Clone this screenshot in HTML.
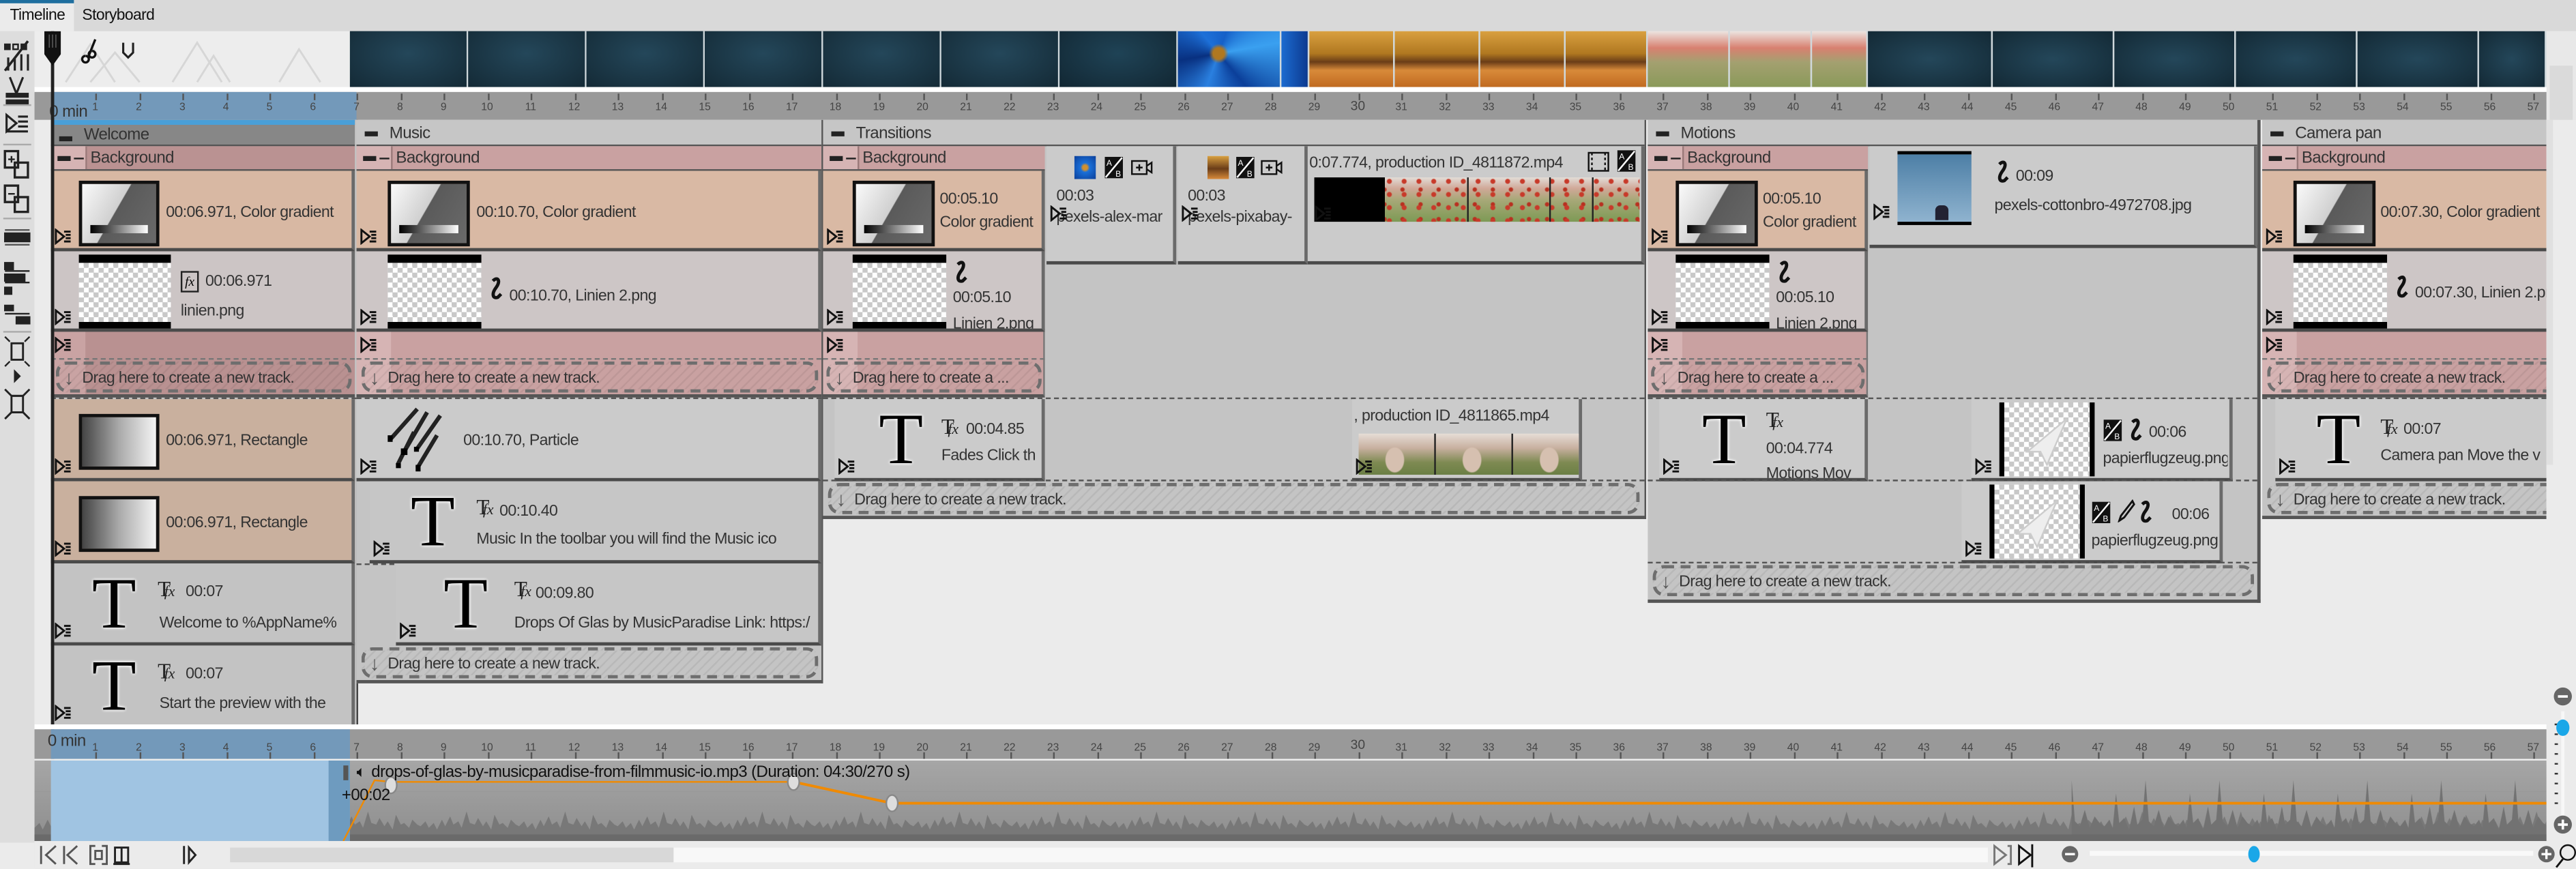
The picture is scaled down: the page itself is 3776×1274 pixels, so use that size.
<!DOCTYPE html>
<html><head><meta charset="utf-8"><style>
html,body{margin:0;padding:0;background:#ebebeb;overflow:hidden}
body{width:3776px;height:1273px}
#s{position:absolute;left:0;top:0;width:1568px;height:529px;transform:scale(2.408163);transform-origin:0 0;font-family:"Liberation Sans",sans-serif;overflow:hidden;background:#ebebeb}
.a{position:absolute}
.t{position:absolute;font-size:9.6px;color:#333;white-space:nowrap;letter-spacing:-.25px;line-height:11px}
.clip{position:absolute;box-sizing:border-box;border-bottom:2px solid #4a4a4a;border-right:2px solid #6a6a6a;overflow:hidden}
.ci{position:absolute;width:11px;height:10px}
.grad{position:absolute;box-sizing:border-box;border:2px solid #111;background:linear-gradient(120deg,#fafafa 0%,#d0d0d0 45%,#5a5a5a 46%,#6a6a6a 100%)}
.grad:after{content:"";position:absolute;left:5px;right:5px;bottom:6px;height:5px;background:linear-gradient(90deg,#000,#fff)}
.chk{position:absolute;box-sizing:border-box;border-top:5px solid #000;border-bottom:4px solid #000;background:repeating-conic-gradient(#c8c8c8 0 25%,#fff 0 50%) 0 0/6px 6px}
.drag{position:absolute;box-sizing:border-box;border:2px dashed #6e6e6e;border-radius:7px;background:repeating-linear-gradient(135deg,rgba(0,0,0,.06) 0 1px,transparent 1px 4px)}
.drag span{position:absolute;left:14px;top:3px;font-size:9.6px;color:#333;white-space:nowrap;letter-spacing:-.25px}
.drag i{position:absolute;left:3px;top:1px;font-style:normal;font-size:12px;color:#555;font-weight:bold}
.T{position:absolute;font-family:"Liberation Serif",serif;font-size:44px;line-height:44px;color:#000;text-shadow:0 0 2px #fff,0 0 2px #fff}
.tfx{position:absolute;font-family:"Liberation Serif",serif;font-size:13px;line-height:13px;color:#222}
.tfx b{font-style:italic;font-size:9px;font-weight:normal;margin-left:-4px}
.gh{position:absolute;height:16px;box-sizing:border-box;border-bottom:1px solid #555;background:#c6c6c6}
.gh .t{top:3px;left:20px;font-size:10px}
.gh:before{content:"";position:absolute;left:5px;top:7px;width:8px;height:3px;background:#222}
.bh{position:absolute;height:15px;box-sizing:border-box;border-bottom:1px solid #555;background:#c9a1a1}
.bh:before{content:"";position:absolute;left:0;top:0;width:21px;height:14px;background:#d6b4b4;border-right:1px solid #9a7a7a}
.bh:after{content:"";position:absolute;left:4px;top:6px;width:8px;height:3px;background:#222;box-shadow:9px 0 0 -1px #222}
.bh .t{left:24px;top:2px;font-size:10px}
.tick{position:absolute;top:57px;width:1px;height:4px;background:#555}
.num{position:absolute;top:62px;font-size:6.5px;color:#444;width:12px;margin-left:-6px;text-align:center}
.anum{position:absolute;top:452px;font-size:6.5px;color:#444;width:12px;margin-left:-6px;text-align:center}
.atick{position:absolute;top:458px;width:1px;height:4px;background:#555}
.frame{position:absolute;top:19px;height:34px;box-sizing:border-box;border-right:1px solid #cfd8dc}
</style></head><body>
<svg width="0" height="0" style="position:absolute">
<defs>
<symbol id="ci" viewBox="0 0 11 10"><path d="M1 1 L6 5 L1 9 Z" fill="none" stroke="#111" stroke-width="1.2"/><path d="M6 2h4M7 4h3M7 6h3M6 8h4" stroke="#111" stroke-width="1.2"/></symbol>
<symbol id="sq" viewBox="0 0 10 16"><path d="M3 3 C6 0 8 3 5 7 C2 11 3 14 6 13 L8 11" fill="none" stroke="#111" stroke-width="2"/></symbol>
<symbol id="ab" viewBox="0 0 12 14"><rect x="0.5" y="0.5" width="11" height="13" fill="#111"/><path d="M1 13 L11 1" stroke="#fff" stroke-width="1"/><text x="1.5" y="6" font-size="5" fill="#fff" font-family="Liberation Sans">A</text><text x="7" y="12.5" font-size="5" fill="#fff" font-family="Liberation Sans">B</text></symbol>
<symbol id="cam" viewBox="0 0 14 12"><rect x="1" y="2" width="9" height="8" fill="none" stroke="#111"/><path d="M10 5 L13 3 V9 L10 7" fill="none" stroke="#111"/><path d="M5.5 4v4M3.5 6h4" stroke="#111"/></symbol>
<pattern id="wv" width="60" height="30" patternUnits="userSpaceOnUse"><path d="M0 22 L3 19 L5 23 L8 17 L10 21 L13 15 L15 20 L18 18 L20 22 L23 12 L25 19 L28 20 L30 16 L33 21 L35 18 L38 23 L40 14 L43 20 L45 19 L48 22 L50 17 L53 20 L55 21 L58 18 L60 22 V30 H0Z" fill="#787878"/></pattern>
<pattern id="wv2" width="45" height="50" patternUnits="userSpaceOnUse"><path d="M0 40 L3 36 L5 41 L7 20 L9 38 L12 35 L15 42 L18 28 L20 39 L23 36 L25 12 L27 37 L30 40 L33 30 L36 41 L39 34 L42 38 L45 40 V50 H0Z" fill="#727272"/></pattern>
</defs></svg>
<div id="s">
<div class="a" style="left:0;top:0;width:1568px;height:19px;background:#d9d9d9"></div>
<div class="a" style="left:0;top:0;width:45px;height:19px;background:#ebebeb;border-top:2px solid #1f6f9f;box-sizing:border-box"></div>
<div class="t" style="left:6px;top:4px;font-size:9.5px;color:#111">Timeline</div>
<div class="t" style="left:50px;top:4px;font-size:9.5px;color:#111">Storyboard</div>
<div class="a" style="left:0;top:19px;width:21px;height:494px;background:#dddddd"></div>
<svg class="a" style="left:0;top:19px" width="21" height="250" viewBox="0 0 21 250">
<g fill="#222" stroke="#222">
<rect x="3" y="8" width="3" height="3"/><rect x="8" y="8" width="3" height="3" fill="none"/><rect x="13" y="8" width="3" height="3"/><path d="M3 24 L17 6" stroke-width="1.5"/><path d="M5 24V16M9 24V16M13 24V14M17 24V14" stroke-width="1.3"/>
<path d="M2 45h17" stroke="#aaa"/>
<path d="M6 28 L10 38 L14 28" fill="none" stroke-width="1.3"/><rect x="4" y="38" width="13" height="2"/><rect x="4" y="42" width="13" height="2"/>
<path d="M4 51 L10 56 L4 61Z" fill="none" stroke-width="1.3"/><path d="M11 52h6M11 55h6M11 58h6M4 61h13" stroke-width="1.3"/>
<path d="M2 69h17" stroke="#aaa"/>
<rect x="3" y="73" width="8" height="10" fill="none" stroke-width="1.4"/><path d="M5 78h4M7 76v4"/><rect x="9" y="80" width="8" height="9" fill="none" stroke-width="1.4"/>
<rect x="3" y="94" width="8" height="10" fill="none" stroke-width="1.4"/><path d="M5 99h4"/><rect x="9" y="101" width="8" height="9" fill="none" stroke-width="1.4"/>
<path d="M2 114h17" stroke="#aaa"/>
<rect x="3" y="123" width="15" height="5"/><path d="M3 121h15M3 130h15" stroke="#555"/>
<rect x="3" y="141" width="5" height="4"/><path d="M3 146h15" /><rect x="3" y="148" width="12" height="4"/><path d="M3 153h15"/><rect x="3" y="156" width="4" height="4"/>
<rect x="3" y="167" width="5" height="3"/><path d="M3 172h15"/><rect x="10" y="174" width="8" height="4"/>
<path d="M2 183h17" stroke="#aaa"/>
<rect x="7" y="190" width="7" height="10" fill="none" stroke-width="1.2"/><path d="M3 186l3 3M18 186l-3 3M3 204l3-3M18 204l-3-3" stroke-width="1"/>
<path d="M9 207 L12 210 L9 213Z"/>
<rect x="7" y="222" width="7" height="10" fill="none" stroke-width="1.2"/><path d="M3 218l4 4M18 218l-4 4M3 236l4-4M18 236l-4-4M7 222h7M7 232h7" stroke-width="1.2"/>
</g></svg>
<div class="a" style="left:21px;top:19px;width:192px;height:34px;background:#ededed"></div>
<svg class="a" style="left:30px;top:22px" width="180" height="30"><g fill="none" stroke="#d6d6d6" stroke-width="1.2"><path d="M10 28 L25 5 L40 28M25 28 L40 10 L55 28M75 28 L90 4 L105 28M90 28 L100 12 L110 28M140 28 L152 8 L165 28"/></g></svg>
<div class="a" style="left:213px;top:19px;width:504px;height:34px;background:#17303d"></div>
<div class="frame" style="left:213px;width:72px;background:radial-gradient(ellipse at 50% 40%,#24475a,#142a36)"></div>
<div class="frame" style="left:285px;width:72px;background:radial-gradient(ellipse at 50% 40%,#24475a,#142a36)"></div>
<div class="frame" style="left:357px;width:72px;background:radial-gradient(ellipse at 50% 40%,#24475a,#142a36)"></div>
<div class="frame" style="left:429px;width:72px;background:radial-gradient(ellipse at 50% 40%,#24475a,#142a36)"></div>
<div class="frame" style="left:501px;width:72px;background:radial-gradient(ellipse at 50% 40%,#24475a,#142a36)"></div>
<div class="frame" style="left:573px;width:72px;background:radial-gradient(ellipse at 50% 40%,#24475a,#142a36)"></div>
<div class="frame" style="left:645px;width:72px;background:radial-gradient(ellipse at 50% 40%,#1f4356,#122733)"></div>
<div class="frame" style="left:717px;width:63px;background:radial-gradient(circle at 40% 40%,#b07820 0 8%,transparent 14%),conic-gradient(from 20deg at 40% 40%,#1560c8,#3aa0f0,#0b3f9a,#2a80e0,#083080,#1d70d8,#1560c8)"></div>
<div class="frame" style="left:780px;width:17px;background:linear-gradient(90deg,#1c6bd0,#0c3a90)"></div>
<div class="frame" style="left:797px;width:52px;background:linear-gradient(180deg,#d9a040 0%,#b07820 40%,#6a3d18 55%,#d88a3a 70%,#c06a20 100%)"></div>
<div class="frame" style="left:849px;width:52px;background:linear-gradient(180deg,#d9a040 0%,#b07820 40%,#6a3d18 55%,#d88a3a 70%,#c06a20 100%)"></div>
<div class="frame" style="left:901px;width:52px;background:linear-gradient(180deg,#d9a040 0%,#b07820 40%,#6a3d18 55%,#d88a3a 70%,#c06a20 100%)"></div>
<div class="frame" style="left:953px;width:50px;background:linear-gradient(180deg,#d9a040 0%,#b07820 40%,#6a3d18 55%,#d88a3a 70%,#c06a20 100%)"></div>
<div class="frame" style="left:1003px;width:50px;background:linear-gradient(180deg,#ece4e0 0%,#d88070 30%,#a4a070 55%,#8a9a5a 100%)"></div>
<div class="frame" style="left:1053px;width:50px;background:linear-gradient(180deg,#ece4e0 0%,#d88070 30%,#a4a070 55%,#8a9a5a 100%)"></div>
<div class="frame" style="left:1103px;width:34px;background:linear-gradient(180deg,#ece4e0 0%,#d88070 30%,#a4a070 55%,#8a9a5a 100%)"></div>
<div class="frame" style="left:1137px;width:76px;background:radial-gradient(ellipse at 50% 50%,#24475a,#132935)"></div>
<div class="frame" style="left:1213px;width:74px;background:radial-gradient(ellipse at 50% 50%,#24475a,#132935)"></div>
<div class="frame" style="left:1287px;width:74px;background:radial-gradient(ellipse at 50% 50%,#24475a,#132935)"></div>
<div class="frame" style="left:1361px;width:74px;background:radial-gradient(ellipse at 50% 50%,#24475a,#132935)"></div>
<div class="frame" style="left:1435px;width:74px;background:radial-gradient(ellipse at 50% 50%,#24475a,#132935)"></div>
<div class="frame" style="left:1509px;width:41px;background:radial-gradient(ellipse at 50% 50%,#24475a,#132935)"></div>
<div class="a" style="left:1550px;top:19px;width:18px;height:420px;background:#e8e8e8"></div>
<div class="a" style="left:1552px;top:40px;width:14px;height:380px;background:#dadada"></div>
<div class="a" style="left:21px;top:53px;width:1529px;height:3px;background:#fff"></div>
<div class="a" style="left:21px;top:56px;width:1529px;height:17px;background:#999"></div>
<div class="a" style="left:31px;top:56px;width:186px;height:17px;background:#7399ba"></div>
<div id="rul"></div>
<div class="t" style="left:30px;top:63px;font-size:10px;color:#333">0 min</div>
<div class="a" style="left:21px;top:73px;width:1529px;height:368px;background:#ebebeb"></div>

<!-- WELCOME -->
<div class="a" style="left:31px;top:73px;width:186px;height:370px;background:#c4c4c4;border-right:1px solid #444"></div>
<div class="gh" style="left:31px;top:73px;width:185px;background:#878787;border-top:3px solid #4a9fd8;height:16px"><div class="t" style="top:1px">Welcome</div></div>
<div class="bh" style="left:31px;top:89px;width:185px;background:#ba9292"><div class="t">Background</div></div>
<div class="clip" style="left:31px;top:104px;width:185px;height:49px;background:#d8b8a3"></div>
<div class="grad" style="left:48px;top:110px;width:49px;height:40px"></div>
<div class="t" style="left:101px;top:124px">00:06.971, Color gradient</div>
<svg class="ci" style="left:33px;top:139px"><use href="#ci"/></svg>
<div class="clip" style="left:31px;top:153px;width:185px;height:49px;background:#ccc5c5"></div>
<div class="chk" style="left:48px;top:155px;width:56px;height:45px"></div>
<div class="a" style="left:110px;top:165px;width:11px;height:13px;border:1px solid #222;box-sizing:border-box;font:italic 8px 'Liberation Serif',serif;text-align:center;line-height:11px">fx</div>
<div class="t" style="left:125px;top:166px">00:06.971</div>
<div class="t" style="left:110px;top:184px">linien.png</div>
<svg class="ci" style="left:33px;top:188px"><use href="#ci"/></svg>
<div class="a" style="left:31px;top:202px;width:185px;height:40px;background:#b99191;border-bottom:2px solid #555;box-sizing:border-box"></div>
<div class="a" style="left:31px;top:202px;width:21px;height:38px;background:#c9a3a3"></div>
<div class="a" style="left:31px;top:218px;width:185px;border-top:1px dashed #777"></div>
<svg class="ci" style="left:33px;top:205px"><use href="#ci"/></svg>
<div class="drag" style="left:34px;top:220px;width:180px;height:19px"><i>↓</i><span>Drag here to create a new track.</span></div>
<div class="a" style="left:31px;top:242px;width:186px;border-top:1px dashed #555"></div>
<div class="clip" style="left:31px;top:243px;width:185px;height:50px;background:#c9b09e"></div>
<div class="a" style="left:48px;top:252px;width:49px;height:34px;box-sizing:border-box;border:2px solid #111;background:linear-gradient(90deg,#444,#aaa 50%,#f4f4f4)"></div>
<div class="t" style="left:101px;top:263px">00:06.971, Rectangle</div>
<svg class="ci" style="left:33px;top:279px"><use href="#ci"/></svg>
<div class="clip" style="left:31px;top:293px;width:185px;height:50px;background:#c9b09e"></div>
<div class="a" style="left:48px;top:302px;width:49px;height:34px;box-sizing:border-box;border:2px solid #111;background:linear-gradient(90deg,#444,#aaa 50%,#f4f4f4)"></div>
<div class="t" style="left:101px;top:313px">00:06.971, Rectangle</div>
<svg class="ci" style="left:33px;top:329px"><use href="#ci"/></svg>
<div class="clip" style="left:31px;top:343px;width:185px;height:50px;background:#c3c3c3"></div>
<div class="T" style="left:56px;top:346px">T</div>
<div class="tfx" style="left:96px;top:352px">T<b>fx</b></div>
<div class="t" style="left:113px;top:355px">00:07</div>
<div class="t" style="left:97px;top:374px">Welcome to %AppName%</div>
<svg class="ci" style="left:33px;top:379px"><use href="#ci"/></svg>
<div class="clip" style="left:31px;top:393px;width:185px;height:50px;background:#c3c3c3;border-bottom:none"></div>
<div class="T" style="left:56px;top:396px">T</div>
<div class="tfx" style="left:96px;top:402px">T<b>fx</b></div>
<div class="t" style="left:113px;top:405px">00:07</div>
<div class="t" style="left:97px;top:423px">Start the preview with the</div>
<svg class="ci" style="left:33px;top:429px"><use href="#ci"/></svg>

<!-- MUSIC -->
<div class="a" style="left:217px;top:73px;width:284px;height:343px;background:#c4c4c4;border-right:1px solid #555;border-bottom:2px solid #555;box-sizing:border-box"></div>
<div class="gh" style="left:217px;top:73px;width:283px"><div class="t">Music</div></div>
<div class="bh" style="left:217px;top:89px;width:283px"><div class="t">Background</div></div>
<div class="clip" style="left:217px;top:104px;width:283px;height:49px;background:#d9b9a4"></div>
<div class="grad" style="left:236px;top:110px;width:50px;height:40px"></div>
<div class="t" style="left:290px;top:124px">00:10.70, Color gradient</div>
<svg class="ci" style="left:219px;top:139px"><use href="#ci"/></svg>
<div class="clip" style="left:217px;top:153px;width:283px;height:49px;background:#cdc6c6"></div>
<div class="chk" style="left:236px;top:155px;width:57px;height:45px"></div>
<svg class="a" style="left:297px;top:168px" width="10" height="16"><use href="#sq"/></svg>
<div class="t" style="left:310px;top:175px">00:10.70, Linien 2.png</div>
<svg class="ci" style="left:219px;top:188px"><use href="#ci"/></svg>
<div class="a" style="left:217px;top:202px;width:283px;height:40px;background:#c9a1a1;border-bottom:2px solid #555;box-sizing:border-box"></div>
<div class="a" style="left:217px;top:202px;width:21px;height:38px;background:#d6b4b4"></div>
<div class="a" style="left:217px;top:218px;width:283px;border-top:1px dashed #777"></div>
<svg class="ci" style="left:219px;top:205px"><use href="#ci"/></svg>
<div class="drag" style="left:220px;top:220px;width:278px;height:19px"><i>↓</i><span>Drag here to create a new track.</span></div>
<div class="a" style="left:217px;top:242px;width:283px;border-top:1px dashed #555"></div>
<div class="clip" style="left:217px;top:243px;width:283px;height:50px;background:#cbcbcb"></div>
<svg class="a" style="left:232px;top:247px" width="50" height="42"><g stroke="#222" stroke-width="2.5"><path d="M22 2 L6 20"/><path d="M28 4 L14 28"/><path d="M36 6 L22 26"/><path d="M34 18 L22 38"/><path d="M20 16 L10 36"/></g><g fill="#000"><rect x="4" y="18" width="3" height="4"/><rect x="12" y="26" width="4" height="4"/><rect x="20" y="25" width="3" height="3"/><rect x="21" y="36" width="3" height="4"/><rect x="9" y="35" width="3" height="3"/></g></svg>
<div class="t" style="left:282px;top:263px">00:10.70, Particle</div>
<svg class="ci" style="left:219px;top:279px"><use href="#ci"/></svg>
<div class="clip" style="left:225px;top:293px;width:275px;height:50px;background:#c6c6c6"></div>
<div class="T" style="left:250px;top:296px">T</div>
<div class="tfx" style="left:290px;top:302px">T<b>fx</b></div>
<div class="t" style="left:304px;top:306px">00:10.40</div>
<div class="t" style="left:290px;top:323px">Music In the toolbar you will find the Music ico</div>
<svg class="ci" style="left:227px;top:329px"><use href="#ci"/></svg>
<div class="a" style="left:217px;top:343px;width:283px;border-top:1px dashed #555"></div>
<div class="clip" style="left:241px;top:343px;width:259px;height:50px;background:#c6c6c6"></div>
<div class="T" style="left:270px;top:346px">T</div>
<div class="tfx" style="left:313px;top:352px">T<b>fx</b></div>
<div class="t" style="left:326px;top:356px">00:09.80</div>
<div class="t" style="left:313px;top:374px">Drops Of Glas by MusicParadise Link: https:/</div>
<svg class="ci" style="left:243px;top:379px"><use href="#ci"/></svg>
<div class="drag" style="left:220px;top:394px;width:278px;height:19px"><i>↓</i><span>Drag here to create a new track.</span></div>

<!-- TRANSITIONS -->
<div class="a" style="left:501px;top:73px;width:501px;height:243px;background:#c4c4c4;border-right:1px solid #555;border-bottom:2px solid #555;box-sizing:border-box"></div>
<div class="gh" style="left:501px;top:73px;width:500px"><div class="t">Transitions</div></div>
<div class="bh" style="left:501px;top:89px;width:135px"><div class="t">Background</div></div>
<div class="clip" style="left:501px;top:104px;width:135px;height:49px;background:#d9b9a4"></div>
<div class="grad" style="left:519px;top:110px;width:50px;height:40px"></div>
<div class="t" style="left:572px;top:116px">00:05.10</div>
<div class="t" style="left:572px;top:130px">Color gradient</div>
<svg class="ci" style="left:503px;top:139px"><use href="#ci"/></svg>
<div class="clip" style="left:501px;top:153px;width:135px;height:49px;background:#cdc6c6"></div>
<div class="chk" style="left:519px;top:155px;width:57px;height:45px"></div>
<svg class="a" style="left:580px;top:158px" width="10" height="16"><use href="#sq"/></svg>
<div class="t" style="left:580px;top:176px">00:05.10</div>
<div class="t" style="left:580px;top:192px;height:8px;overflow:hidden">Linien 2.png</div>
<svg class="ci" style="left:503px;top:188px"><use href="#ci"/></svg>
<div class="a" style="left:501px;top:202px;width:135px;height:40px;background:#c9a1a1;border-bottom:2px solid #555;border-right:1px solid #777;box-sizing:border-box"></div>
<div class="a" style="left:501px;top:202px;width:21px;height:38px;background:#d6b4b4"></div>
<div class="a" style="left:501px;top:218px;width:135px;border-top:1px dashed #777"></div>
<svg class="ci" style="left:503px;top:205px"><use href="#ci"/></svg>
<div class="drag" style="left:503px;top:220px;width:131px;height:19px"><i>↓</i><span>Drag here to create a ...</span></div>
<div class="clip" style="left:637px;top:89px;width:79px;height:72px;background:#cbcbcb"></div>
<div class="a" style="left:654px;top:95px;width:13px;height:14px;background:radial-gradient(circle,#d09030 0 15%,#1a6fd8 30%,#0b3f9a)"></div>
<svg class="a" style="left:672px;top:95px" width="12" height="14"><use href="#ab"/></svg>
<svg class="a" style="left:688px;top:96px" width="14" height="12"><use href="#cam"/></svg>
<div class="t" style="left:643px;top:114px">00:03</div>
<div class="t" style="left:643px;top:127px;width:72px;overflow:hidden">pexels-alex-mar</div>
<svg class="ci" style="left:639px;top:125px"><use href="#ci"/></svg>
<div class="clip" style="left:717px;top:89px;width:79px;height:72px;background:#cbcbcb"></div>
<div class="a" style="left:735px;top:95px;width:13px;height:14px;background:linear-gradient(180deg,#d9a040,#6a3d18 55%,#d88a3a)"></div>
<svg class="a" style="left:752px;top:95px" width="12" height="14"><use href="#ab"/></svg>
<svg class="a" style="left:767px;top:96px" width="14" height="12"><use href="#cam"/></svg>
<div class="t" style="left:723px;top:114px">00:03</div>
<div class="t" style="left:723px;top:127px;width:72px;overflow:hidden">pexels-pixabay-</div>
<svg class="ci" style="left:719px;top:125px"><use href="#ci"/></svg>
<div class="clip" style="left:796px;top:89px;width:205px;height:72px;background:#cbcbcb"></div>
<div class="t" style="left:797px;top:94px">0:07.774, production ID_4811872.mp4</div>
<svg class="a" style="left:966px;top:92px" width="14" height="13"><rect x="1" y="1" width="12" height="11" fill="none" stroke="#111"/><path d="M3 1v11M11 1v11" stroke="#111" stroke-dasharray="1.5 1.5"/></svg>
<svg class="a" style="left:984px;top:91px" width="12" height="14"><use href="#ab"/></svg>
<div class="a" style="left:800px;top:108px;width:43px;height:27px;background:#000"></div>
<div class="a" style="left:843px;top:108px;width:155px;height:27px;background:linear-gradient(180deg,#e2dcd6 0%,#d0a898 25%,#a8a878 50%,#7d9a55 100%)"></div>
<div class="a" style="left:843px;top:108px;width:155px;height:27px;background:radial-gradient(circle at 30% 30%,#c83a2a 0 1.2px,transparent 1.8px) 0 0/9px 8px,radial-gradient(circle at 70% 60%,#b83020 0 1px,transparent 1.6px) 3px 2px/11px 9px"></div>
<div class="a" style="left:893px;top:108px;width:1px;height:27px;background:#222"></div>
<div class="a" style="left:943px;top:108px;width:1px;height:27px;background:#222"></div>
<div class="a" style="left:969px;top:108px;width:1px;height:27px;background:#222"></div>
<svg class="ci" style="left:800px;top:125px"><use href="#ci"/></svg>
<div class="a" style="left:501px;top:242px;width:500px;border-top:1px dashed #555"></div>
<div class="clip" style="left:508px;top:243px;width:128px;height:50px;background:#cbcbcb"></div>
<div class="T" style="left:535px;top:246px">T</div>
<div class="tfx" style="left:573px;top:253px">T<b>fx</b></div>
<div class="t" style="left:588px;top:256px">00:04.85</div>
<div class="t" style="left:573px;top:272px;width:62px;overflow:hidden">Fades Click th</div>
<svg class="ci" style="left:510px;top:279px"><use href="#ci"/></svg>
<div class="clip" style="left:823px;top:243px;width:140px;height:50px;background:#cbcbcb"></div>
<div class="t" style="left:824px;top:248px">, production ID_4811865.mp4</div>
<div class="a" style="left:827px;top:264px;width:134px;height:25px;background:linear-gradient(180deg,#e6ddd6 0%,#c8b0a0 35%,#7e8a52 70%,#6b7f45 100%)"></div>
<div class="a" style="left:827px;top:264px;width:134px;height:25px;background:radial-gradient(ellipse 6px 8px at 22px 16px,#d6c0b0 0 90%,transparent 100%) 0 0/47px 25px"></div>
<div class="a" style="left:873px;top:264px;width:1px;height:25px;background:#222"></div>
<div class="a" style="left:920px;top:264px;width:1px;height:25px;background:#222"></div>
<svg class="ci" style="left:825px;top:279px"><use href="#ci"/></svg>
<div class="a" style="left:501px;top:292px;width:500px;border-top:1px dashed #555"></div>
<div class="drag" style="left:504px;top:294px;width:494px;height:19px"><i>↓</i><span>Drag here to create a new track.</span></div>

<!-- MOTIONS -->
<div class="a" style="left:1003px;top:73px;width:373px;height:294px;background:#c4c4c4;border-right:2px solid #555;border-bottom:2px solid #555;box-sizing:border-box"></div>
<div class="gh" style="left:1003px;top:73px;width:371px"><div class="t">Motions</div></div>
<div class="bh" style="left:1003px;top:89px;width:134px"><div class="t">Background</div></div>
<div class="clip" style="left:1003px;top:104px;width:134px;height:49px;background:#d9b9a4"></div>
<div class="grad" style="left:1020px;top:110px;width:50px;height:40px"></div>
<div class="t" style="left:1073px;top:116px">00:05.10</div>
<div class="t" style="left:1073px;top:130px">Color gradient</div>
<svg class="ci" style="left:1005px;top:139px"><use href="#ci"/></svg>
<div class="clip" style="left:1003px;top:153px;width:134px;height:49px;background:#cdc6c6"></div>
<div class="chk" style="left:1020px;top:155px;width:57px;height:45px"></div>
<svg class="a" style="left:1081px;top:158px" width="10" height="16"><use href="#sq"/></svg>
<div class="t" style="left:1081px;top:176px">00:05.10</div>
<div class="t" style="left:1081px;top:192px;height:8px;overflow:hidden">Linien 2.png</div>
<svg class="ci" style="left:1005px;top:188px"><use href="#ci"/></svg>
<div class="a" style="left:1003px;top:202px;width:134px;height:40px;background:#c9a1a1;border-bottom:2px solid #555;border-right:1px solid #777;box-sizing:border-box"></div>
<div class="a" style="left:1003px;top:202px;width:21px;height:38px;background:#d6b4b4"></div>
<div class="a" style="left:1003px;top:218px;width:134px;border-top:1px dashed #777"></div>
<svg class="ci" style="left:1005px;top:205px"><use href="#ci"/></svg>
<div class="drag" style="left:1005px;top:220px;width:130px;height:19px"><i>↓</i><span>Drag here to create a ...</span></div>
<div class="clip" style="left:1138px;top:89px;width:236px;height:62px;background:#cbcbcb"></div>
<div class="a" style="left:1155px;top:92px;width:45px;height:45px;box-sizing:border-box;border-top:2px solid #000;border-bottom:2px solid #000;background:linear-gradient(180deg,#4d7fa6,#8fb3cf)"></div>
<div class="a" style="left:1178px;top:125px;width:8px;height:9px;background:#223;border-radius:3px 3px 0 0"></div>
<svg class="a" style="left:1214px;top:97px" width="10" height="16"><use href="#sq"/></svg>
<div class="t" style="left:1227px;top:102px">00:09</div>
<div class="t" style="left:1214px;top:120px">pexels-cottonbro-4972708.jpg</div>
<svg class="ci" style="left:1140px;top:124px"><use href="#ci"/></svg>
<div class="a" style="left:1003px;top:242px;width:371px;border-top:1px dashed #555"></div>
<div class="clip" style="left:1010px;top:243px;width:127px;height:50px;background:#cbcbcb"></div>
<div class="T" style="left:1036px;top:246px">T</div>
<div class="tfx" style="left:1075px;top:249px">T<b>fx</b></div>
<div class="t" style="left:1075px;top:268px">00:04.774</div>
<div class="t" style="left:1075px;top:283px;height:8px;overflow:hidden">Motions Mov</div>
<svg class="ci" style="left:1012px;top:279px"><use href="#ci"/></svg>
<div class="clip" style="left:1200px;top:243px;width:159px;height:50px;background:#cbcbcb"></div>
<div class="chk" style="left:1217px;top:245px;width:58px;height:45px;border-top:0;border-bottom:0;border-left:3px solid #000;border-right:3px solid #000"></div>
<svg class="a" style="left:1228px;top:253px" width="36" height="32"><path d="M30 2 L6 22 L14 22 L18 30 Z" fill="#eee" stroke="#ccc"/></svg>
<svg class="a" style="left:1280px;top:255px" width="12" height="14"><use href="#ab"/></svg>
<svg class="a" style="left:1295px;top:254px" width="10" height="16"><use href="#sq"/></svg>
<div class="t" style="left:1308px;top:258px">00:06</div>
<div class="t" style="left:1280px;top:274px;width:76px;overflow:hidden">papierflugzeug.png</div>
<svg class="ci" style="left:1202px;top:279px"><use href="#ci"/></svg>
<div class="a" style="left:1003px;top:292px;width:371px;border-top:1px dashed #555"></div>
<div class="clip" style="left:1194px;top:293px;width:159px;height:50px;background:#cbcbcb"></div>
<div class="chk" style="left:1211px;top:295px;width:58px;height:45px;border-top:0;border-bottom:0;border-left:3px solid #000;border-right:3px solid #000"></div>
<svg class="a" style="left:1222px;top:303px" width="36" height="32"><path d="M30 2 L6 22 L14 22 L18 30 Z" fill="#eee" stroke="#ccc"/></svg>
<svg class="a" style="left:1273px;top:305px" width="12" height="14"><use href="#ab"/></svg>
<svg class="a" style="left:1288px;top:304px" width="12" height="14"><path d="M10 1 L3 10 L2 13 L5 11 L11 3Z" fill="none" stroke="#111" stroke-width="1.2"/></svg>
<svg class="a" style="left:1301px;top:304px" width="10" height="16"><use href="#sq"/></svg>
<div class="t" style="left:1322px;top:308px">00:06</div>
<div class="t" style="left:1273px;top:324px;width:77px;overflow:hidden">papierflugzeug.png</div>
<svg class="ci" style="left:1196px;top:329px"><use href="#ci"/></svg>
<div class="a" style="left:1003px;top:342px;width:371px;border-top:1px dashed #555"></div>
<div class="drag" style="left:1006px;top:344px;width:366px;height:19px"><i>↓</i><span>Drag here to create a new track.</span></div>

<!-- CAMERA PAN -->
<div class="a" style="left:1377px;top:73px;width:173px;height:243px;background:#c4c4c4;border-bottom:2px solid #555;box-sizing:border-box"></div>
<div class="gh" style="left:1377px;top:73px;width:173px"><div class="t">Camera pan</div></div>
<div class="bh" style="left:1377px;top:89px;width:173px"><div class="t">Background</div></div>
<div class="clip" style="left:1377px;top:104px;width:173px;height:49px;background:#d9b9a4;border-right:0"></div>
<div class="grad" style="left:1396px;top:110px;width:50px;height:40px"></div>
<div class="t" style="left:1449px;top:124px">00:07.30, Color gradient</div>
<svg class="ci" style="left:1379px;top:139px"><use href="#ci"/></svg>
<div class="clip" style="left:1377px;top:153px;width:173px;height:49px;background:#cdc6c6;border-right:0"></div>
<div class="chk" style="left:1396px;top:155px;width:57px;height:45px"></div>
<svg class="a" style="left:1457px;top:167px" width="10" height="16"><use href="#sq"/></svg>
<div class="t" style="left:1470px;top:173px">00:07.30, Linien 2.png</div>
<svg class="ci" style="left:1379px;top:188px"><use href="#ci"/></svg>
<div class="a" style="left:1377px;top:202px;width:173px;height:40px;background:#c9a1a1;border-bottom:2px solid #555;box-sizing:border-box"></div>
<div class="a" style="left:1377px;top:202px;width:21px;height:38px;background:#d6b4b4"></div>
<div class="a" style="left:1377px;top:218px;width:173px;border-top:1px dashed #777"></div>
<svg class="ci" style="left:1379px;top:205px"><use href="#ci"/></svg>
<div class="drag" style="left:1380px;top:220px;width:180px;height:19px"><i>↓</i><span>Drag here to create a new track.</span></div>
<div class="a" style="left:1377px;top:242px;width:173px;border-top:1px dashed #555"></div>
<div class="clip" style="left:1385px;top:243px;width:165px;height:50px;background:#cbcbcb;border-right:0"></div>
<div class="T" style="left:1410px;top:246px">T</div>
<div class="tfx" style="left:1449px;top:253px">T<b>fx</b></div>
<div class="t" style="left:1463px;top:256px">00:07</div>
<div class="t" style="left:1449px;top:272px">Camera pan Move the v</div>
<svg class="ci" style="left:1387px;top:279px"><use href="#ci"/></svg>
<div class="drag" style="left:1380px;top:294px;width:180px;height:19px"><i>↓</i><span>Drag here to create a new track.</span></div>
<div class="a" style="left:1550px;top:73px;width:18px;height:369px;background:#ebebeb"></div>
<div class="a" style="left:1550px;top:73px;width:4px;height:210px;background:#e0e0e0"></div>

<svg class="a" style="left:1552px;top:415px" width="16" height="95"><circle cx="8" cy="9" r="5.5" fill="#666"/><path d="M5 9h6" stroke="#fff" stroke-width="1.5"/><rect x="7" y="18" width="2" height="72" fill="#f7f7f7"/><g stroke="#333"><path d="M3 26h2M3 32h2M3 38h2M3 44h2M3 50h2M3 56h2M3 62h2M3 68h2M3 74h2"/></g><ellipse cx="8" cy="28" rx="4" ry="5" fill="#1aa7e8"/><circle cx="8" cy="87" r="5.5" fill="#666"/><path d="M5 87h6M8 84v6" stroke="#fff" stroke-width="1.5"/></svg>

<div class="a" style="left:31px;top:19px;width:2px;height:493px;background:#222"></div>
<svg class="a" style="left:26px;top:19px" width="12" height="22"><path d="M1 0 H11 V14 L6 21 L1 14Z" fill="#111"/><path d="M4 2v8M6 2v8M8 2v8" stroke="#555" stroke-width=".7"/></svg>
<svg class="a" style="left:46px;top:22px" width="40" height="20"><path d="M12 2 L8 12M6 12a2 2 0 1 0 .1 0M10 9a2 2 0 1 0 .1 0" fill="none" stroke="#111" stroke-width="1.4"/><path d="M29 4 V10 L32 13 L35 10 V4" fill="none" stroke="#222" stroke-width="1.3"/></svg>

<!-- AUDIO -->
<div class="a" style="left:21px;top:441px;width:1529px;height:3px;background:#fff"></div>
<div class="a" style="left:21px;top:444px;width:1529px;height:18px;background:#999"></div>
<div class="a" style="left:31px;top:444px;width:182px;height:18px;background:#7399ba"></div>
<div class="t" style="left:29px;top:446px;font-size:10px;color:#333">0 min</div>
<div id="arul"></div>
<div class="a" style="left:21px;top:462px;width:1529px;height:1px;background:#eee"></div>
<div class="a" style="left:21px;top:463px;width:1529px;height:49px;background:linear-gradient(180deg,#a6a6a6,#8e8e8e)"></div>
<svg class="a" style="left:21px;top:463px" width="1529" height="49"><rect x="0" y="0" width="1529" height="49" fill="url(#wv)" transform="translate(0,19)"/><rect x="1240" y="0" width="289" height="49" fill="url(#wv2)"/><rect x="0" y="45" width="1529" height="4" fill="#6a6a6a"/></svg>
<div class="a" style="left:31px;top:463px;width:182px;height:49px;background:#a0c4e2"></div>
<div class="a" style="left:200px;top:463px;width:13px;height:49px;background:#6e9bbf"></div>
<svg class="a" style="left:21px;top:463px" width="1529" height="49"><path d="M188 49 L207 12 L217 13 L462 13 L522 26 L1529 26" fill="none" stroke="#f08a00" stroke-width="1"/><path d="M462 13 L522 26 L1529 26" fill="none" stroke="#f08a00" stroke-width="1.6"/><ellipse cx="217" cy="15" rx="3.5" ry="5" fill="#ddd" stroke="#888"/><ellipse cx="462" cy="13" rx="3.5" ry="5" fill="#ddd" stroke="#888"/><ellipse cx="522" cy="26" rx="3.5" ry="5" fill="#ddd" stroke="#888"/></svg>
<div class="t" style="left:217px;top:465px;color:#111">🔈︎</div>
<div class="t" style="left:226px;top:465px;color:#111;font-size:10px">drops-of-glas-by-musicparadise-from-filmmusic-io.mp3 (Duration: 04:30/270 s)</div>
<div class="t" style="left:208px;top:479px;color:#111;font-size:10px">+00:02</div>
<div class="a" style="left:209px;top:466px;width:3px;height:9px;background:#555"></div>

<div class="a" style="left:21px;top:512px;width:1529px;height:17px;background:#ebebeb"></div>
<svg class="a" style="left:22px;top:513px" width="100" height="15"><g fill="none" stroke="#555" stroke-width="1.2"><path d="M3 2v11M12 2 L6 7.5 L12 13"/><path d="M17 2v11M25 2 L19 7.5 L25 13"/><path d="M36 2h-3v11h3M40 2h3v11h-3M36 5h4v5h-4z"/><path d="M48 3h4v9h-4zM52 3h4v9h-4zM47 13h10" stroke="#222"/><path d="M90 2v11M93 3 L97 7.5 L93 12 Z" stroke="#222"/></g></svg>
<div class="a" style="left:140px;top:516px;width:1070px;height:9px;background:#f8f8f8"></div>
<div class="a" style="left:140px;top:516px;width:270px;height:9px;background:#d8d8d8"></div>
<svg class="a" style="left:1210px;top:513px" width="358" height="16"><g fill="none" stroke-width="1.2"><path d="M4 2 L11 7.5 L4 13Z M12 2h2v11h-2" stroke="#777"/><path d="M19 2 L26 7.5 L19 13Z M27 1v14" stroke="#111"/></g><circle cx="50" cy="7" r="5" fill="#666"/><path d="M47 7h6" stroke="#fff" stroke-width="1.4"/><rect x="62" y="5" width="270" height="3" fill="#f9f9f9"/><ellipse cx="162" cy="7" rx="3.5" ry="5" fill="#1aa7e8"/><circle cx="340" cy="7" r="5" fill="#666"/><path d="M337 7h6M340 4v6" stroke="#fff" stroke-width="1.4"/><circle cx="353" cy="6" r="4.5" fill="none" stroke="#111"/><path d="M350 10 L346 15" stroke="#111" stroke-width="1.2"/></svg>
</div>
<script>
(function(){var r=document.getElementById('rul'),h='';for(var n=1;n<=57;n++){var x=31.5+26.5*n;h+='<div class="tick" style="left:'+x+'px"></div>';h+='<div class="num" style="left:'+x+'px'+(n==30?';font-size:8px;top:60px':'')+'">'+n+'</div>';}r.outerHTML=h;
var a=document.getElementById('arul'),g='';for(var m=1;m<=57;m++){var y=31.5+26.5*m;g+='<div class="atick" style="left:'+y+'px"></div><div class="anum" style="left:'+y+'px'+(m==30?';font-size:8px;top:449px':'')+'">'+m+'</div>';}a.outerHTML=g;})();
</script>
</body></html>
